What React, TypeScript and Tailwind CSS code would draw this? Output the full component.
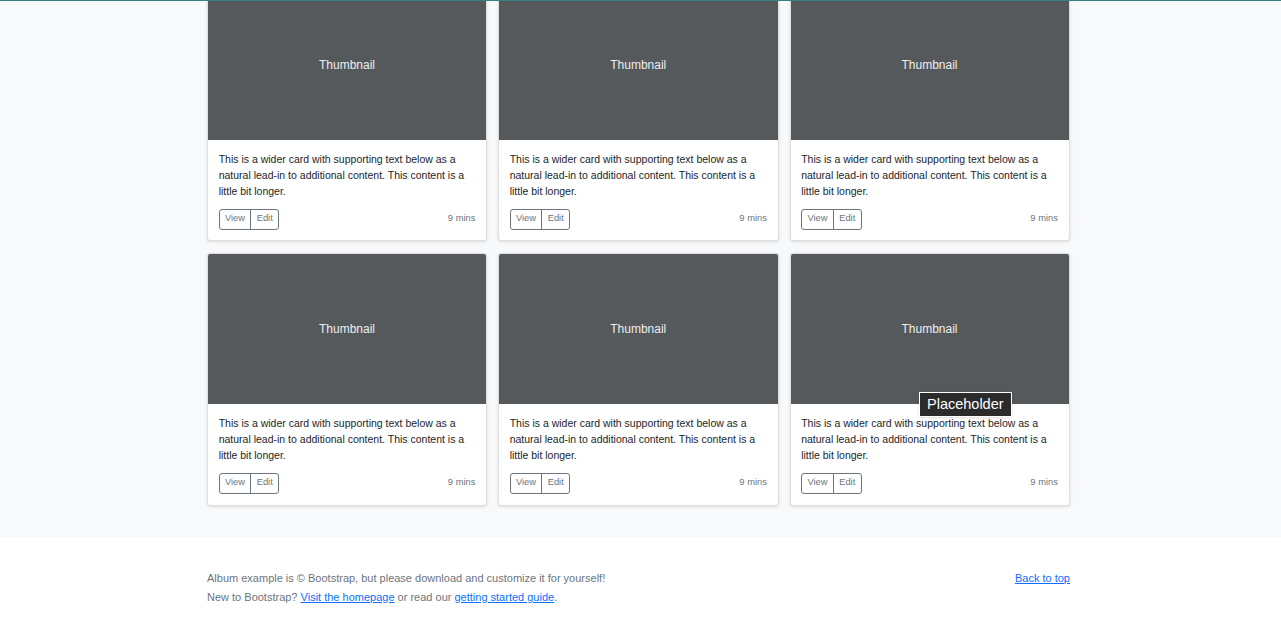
const cards = Array.from({ length: 6 }, (_, i) => i)

function Card() {
  return (
    <div className="flex flex-col overflow-hidden rounded-[3px] border border-black/[.125] bg-white shadow-[0_1px_3px_rgba(0,0,0,0.12)]">
      <div className="flex h-[150px] items-center justify-center bg-[#55595c] text-[12px] text-[#eceeef]">
        Thumbnail
      </div>
      <div className="p-[10.67px]">
        <p className="mb-[10px] text-[10.5px] leading-[16px] text-[#212529]">
          This is a wider card with supporting text below as a natural lead-in to additional content. This content is a little bit longer.
        </p>
        <div className="flex items-center justify-between">
          <div className="flex">
            <button className="h-[21px] rounded-l-[3px] border border-[#6c757d] px-[5.33px] text-[9.33px] text-[#6c757d]">
              View
            </button>
            <button className="-ml-px h-[21px] rounded-r-[3px] border border-[#6c757d] px-[5.33px] text-[9.33px] text-[#6c757d]">
              Edit
            </button>
          </div>
          <small className="text-[9.33px] text-[#6c757d]">9 mins</small>
        </div>
      </div>
    </div>
  )
}

export default function App() {
  return (
    <div className="relative h-[632px] overflow-hidden bg-white font-['Liberation_Sans',Arial,sans-serif]">
      <div className="absolute left-0 right-0 top-0 z-10 h-px bg-[#3a7f80]" />

      <main className="bg-[#f8f9fa] pb-[32px]">
        <div className="-mt-[11px] ml-[207px] grid w-[864px] grid-cols-[280px_280.5px_280px] gap-x-[11px] gap-y-[12px]">
          {cards.map((i) => (
            <Card key={i} />
          ))}
        </div>
      </main>

      <footer className="py-[32px] text-[11px] leading-[16px] text-[#6c757d]">
        <div className="ml-[207px] w-[863px]">
          <p className="float-right">
            <a href="#" className="text-[#0d6efd] underline">Back to top</a>
          </p>
          <p className="mb-[3px]">Album example is © Bootstrap, but please download and customize it for yourself!</p>
          <p>
            New to Bootstrap? <a href="#" className="text-[#0d6efd] underline">Visit the homepage</a> or read our{' '}
            <a href="#" className="text-[#0d6efd] underline">getting started guide</a>.
          </p>
        </div>
      </footer>

      <div className="absolute left-[919px] top-[392px] z-20 border border-white bg-[#2b2b2b] px-[7px] py-[2px] text-[14.5px] leading-[19px] text-white shadow">
        Placeholder
      </div>
    </div>
  )
}
